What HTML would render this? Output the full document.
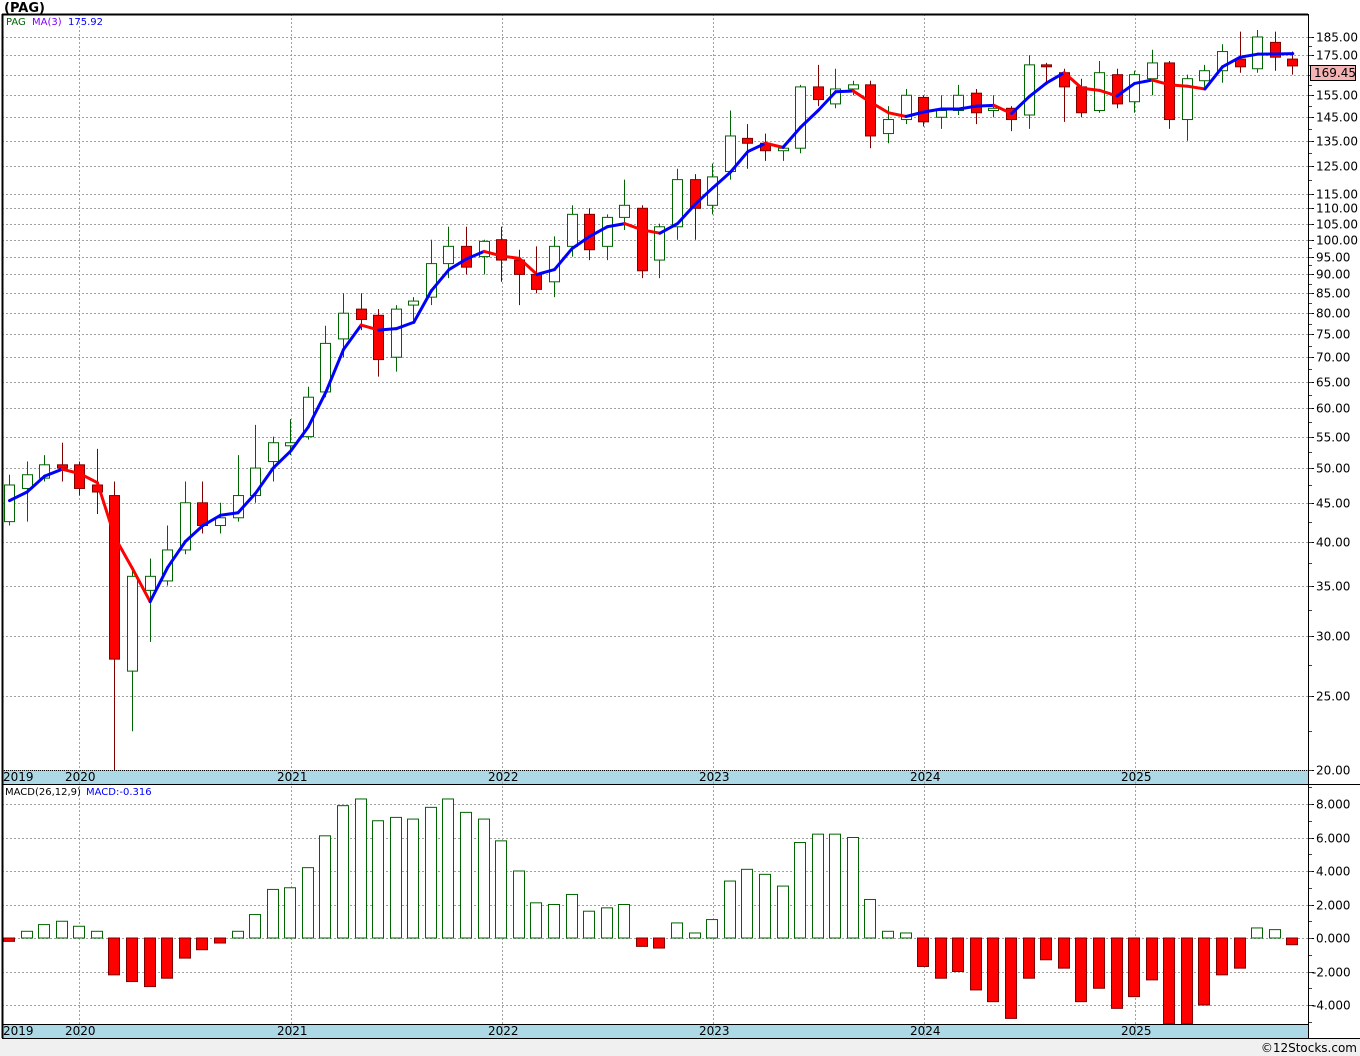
<!DOCTYPE html>
<html><head><meta charset="utf-8"><style>
html,body{margin:0;padding:0;background:#fff;width:1360px;height:1056px;overflow:hidden;font-family:"Liberation Sans","DejaVu Sans",sans-serif}
svg{display:block}
</style></head><body>
<svg id="s" width="1360" height="1056" xmlns="http://www.w3.org/2000/svg" font-family="DejaVu Sans, Liberation Sans, sans-serif"></svg>
<script>
const NS="http://www.w3.org/2000/svg";const s=document.getElementById('s');
function el(t,a,txt){const e=document.createElementNS(NS,t);for(const k in a)e.setAttribute(k,a[k]);if(txt!==undefined)e.textContent=txt;s.appendChild(e);return e;}
const Y=p=>770-329.5*Math.log(p/20);
const MY=v=>938-16.75*v;
const X=i=>9+17.58*i;
el('rect',{x:0,y:1038,width:1360,height:18,fill:'#f0f0f0'});
el('text',{x:4,y:12,'font-size':13,'font-weight':'bold',fill:'#000'},'(PAG)');
el('rect',{x:2,y:770,width:1306,height:14,fill:'#add8e6'});
el('rect',{x:2,y:1024,width:1306,height:14,fill:'#add8e6'});
const pl=[185,175,165,155,145,135,125,115,110,105,100,95,90,85,80,75,70,65,60,55,50,45,40,35,30,25,20];
pl.forEach(p=>{const y=Math.round(Y(p))+.5;el('line',{x1:2,x2:1308,y1:y,y2:y,stroke:'#a0a0a0','stroke-dasharray':'2,2'});
 el('line',{x1:1308,x2:1314,y1:y,y2:y,stroke:'#000'});
 if(p!=165)el('text',{x:1316,y:y+4,'font-size':12,fill:'#000'},p.toFixed(2));});
for(let p=20;p<190;p+=(p<100?2.5:5)){const y=Math.round(Y(p))+.5;el('line',{x1:1308,x2:1312,y1:y,y2:y,stroke:'#444'});}
[8,6,4,2,0,-2,-4].forEach(v=>{const y=Math.round(MY(v))+.5;el('line',{x1:2,x2:1308,y1:y,y2:y,stroke:'#a0a0a0','stroke-dasharray':'2,2'});
 el('line',{x1:1308,x2:1314,y1:y,y2:y,stroke:'#000'});
 el('text',{x:v<0?1312:1316,y:y+4,'font-size':12,fill:'#000'},v.toFixed(3));});
for(let v=-5;v<=9;v++){const y=Math.round(MY(v))+.5;if(y>786&&y<1037)el('line',{x1:1308,x2:1312,y1:y,y2:y,stroke:'#444'});}
const yrs=[[2020,79],[2021,291],[2022,502],[2023,713],[2024,924],[2025,1135]];
yrs.forEach(([n,x])=>{el('line',{x1:x+.5,x2:x+.5,y1:14,y2:1038,stroke:'#a0a0a0','stroke-dasharray':'2,2'});
 el('text',{x:x-14,y:781,'font-size':12,fill:'#000'},n);el('text',{x:x-14,y:1035,'font-size':12,fill:'#000'},n);});
el('text',{x:3,y:781,'font-size':12},'2019');el('text',{x:3,y:1035,'font-size':12},'2019');
el('line',{x1:2,x2:1308,y1:770.5,y2:770.5,stroke:'#000','stroke-dasharray':'1,1'});
el('line',{x1:2,x2:1308,y1:1024.5,y2:1024.5,stroke:'#000'});
const D=[[42.5,47.5,49,42],[47,49,51,42.5],[48.5,50.5,52,48],[50.5,50,54,48],[50.5,47,51,46],[47.5,46.5,53,43.5],[46,28,48,20],[27,36,37,22.5],[34.5,36,38,29.5],[35.5,39,42,35],[39,45,48,38.5],[45,42,48,41],[42,43,45,41],[43,46,52,42.5],[46,50,57,45],[51,54,55,48],[53.5,54,58,52],[55,62,64,54.5],[63,73,77,62],[74,80,85,70],[81,78.5,85,76],[79.5,69.5,81,66],[70,81,82,67],[82,83,84,78],[84,93,100,82],[93,98,104,89],[98,92,104,90],[95,99.5,100,90],[100,94,104,88],[94,90,97,82],[90,86,98,85],[88,98,101,84],[98,108,111,95],[108,97,110,94],[98,107,108,94],[107,111,120,103],[110,91,111,89],[94,104,105,89],[104,120,124,100],[120,110,122,100],[111,121,126,108],[123,137,148,120],[136,134,142,124],[134,131,138,127],[131,132,133,127],[132,159,160,130],[159,153,170,150],[151,158,168,149],[158,160,162,155],[160,137,162,132],[138,144,150,134],[144,155,158,142],[154,143,155,141],[145,148,155,140],[148,155,160,146],[156,147,158,142],[148,149,155,145],[149,144,150,139],[146,170,175,140],[170,169,171,160],[166,159,168,143],[159,147,163,145],[148,166,172,147],[165,151,168,149],[152,165,167,147],[163,171,178,155],[171,144,172,140],[144,163,165,135],[162,167,170,159],[167,177,181,161],[173,169,188,166],[168,185,189,166],[182,174,188,167],[173,169.45,177,165]];
const M=[-0.2,0.4,0.8,1.0,0.7,0.4,-2.2,-2.6,-2.9,-2.4,-1.2,-0.7,-0.3,0.4,1.4,2.9,3.0,4.2,6.1,7.9,8.3,7.0,7.2,7.1,7.8,8.3,7.5,7.1,5.8,4.0,2.1,2.0,2.6,1.6,1.8,2.0,-0.5,-0.6,0.9,0.3,1.1,3.4,4.1,3.8,3.1,5.7,6.2,6.2,6.0,2.3,0.4,0.3,-1.7,-2.4,-2.0,-3.1,-3.8,-4.8,-2.4,-1.3,-1.8,-3.8,-3.0,-4.2,-3.5,-2.5,-5.1,-5.1,-4.0,-2.2,-1.8,0.6,0.5,-0.4];
D.forEach((d,i)=>{const [o,c,h,l]=d;const x=Math.round(X(i));const up=c>=o;const st=up?'#006400':'#800000';
 el('line',{x1:x+.5,x2:x+.5,y1:Y(h),y2:Math.min(Y(l),770),stroke:st});
 const t=Y(Math.max(o,c)),b=Y(Math.min(o,c));
 el('rect',{x:x-4.5,y:t,width:10,height:Math.max(b-t,1.5),fill:up?'#fff':'#ff0000',stroke:st});});
const cl=D.map(d=>d[1]);const ma=cl.map((c,i)=>{const a=cl.slice(Math.max(0,i-2),i+1);return a.reduce((x,y)=>x+y)/a.length;});
ma[0]=45.3;ma[1]=46.5;ma[2]=48.8;
ma[70]=174;ma[71]=175.6;ma[72]=175.7;ma[73]=175.92;
for(let i=1;i<ma.length;i++){el('line',{x1:X(i-1)+.5,y1:Y(ma[i-1]),x2:X(i)+.5,y2:Y(ma[i]),stroke:ma[i]>=ma[i-1]?'#0000ff':'#ff0000','stroke-width':3,'stroke-linecap':'round'});}
M.forEach((v,i)=>{const x=Math.round(X(i));const y0=MY(0),y1=MY(v);
 el('rect',{x:x-5.5,y:Math.min(y0,y1),width:11,height:Math.abs(y1-y0),fill:v<0?'#ff0000':'#fff',stroke:v<0?'#800000':'#006400'});});
el('line',{x1:2,x2:1308,y1:14.5,y2:14.5,stroke:'#000','stroke-width':2});
el('line',{x1:2.5,x2:2.5,y1:14,y2:1038,stroke:'#000','stroke-width':2});
el('line',{x1:1308.5,x2:1308.5,y1:14,y2:1038,stroke:'#000'});
el('line',{x1:2,x2:1360,y1:784.5,y2:784.5,stroke:'#000'});
el('line',{x1:2,x2:1360,y1:1038.5,y2:1038.5,stroke:'#000'});
el('text',{x:6,y:25,'font-size':10,fill:'#006400'},'PAG');
el('text',{x:32,y:25,'font-size':10,fill:'#8000ff'},'MA(3)');
el('text',{x:68,y:25,'font-size':10,fill:'#0000ff'},'175.92');
el('text',{x:5,y:795,'font-size':10,fill:'#000'},'MACD(26,12,9)');
el('text',{x:86,y:795,'font-size':10,fill:'#0000ff'},'MACD:-0.316');
el('rect',{x:1310.5,y:65.5,width:45,height:15,fill:'#f4b4b4',stroke:'#000'});
el('text',{x:1314,y:77,'font-size':12,fill:'#000'},'169.45');
el('text',{x:1357,y:1052,'font-size':12,fill:'#000','text-anchor':'end'},'©12Stocks.com');
</script>
</body></html>
